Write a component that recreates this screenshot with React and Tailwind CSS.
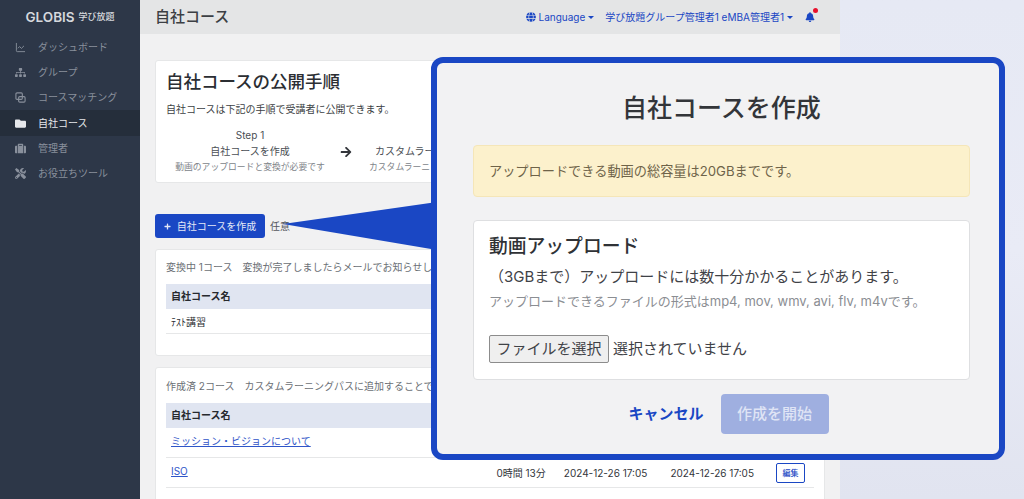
import { FaArrowRight, FaBell, FaFolder, FaGlobe, FaPlus, FaSitemap, FaSuitcase, FaTools } from 'react-icons/fa'
import { LuChartLine } from 'react-icons/lu'

const font = "font-['Inter','Noto_Sans_CJK_JP',sans-serif]"

// two offset squares, the matching icon in the sidebar
function MatchIcon({ className }) {
  return (
    <svg className={className} viewBox="0 0 12 12" fill="none" stroke="currentColor" strokeWidth="1.2">
      <rect x="1" y="1" width="7" height="7" rx="1.2" />
      <rect x="4" y="5" width="7" height="6" rx="1.2" />
    </svg>
  )
}

const nav = [
  { label: 'ダッシュボード', icon: LuChartLine },
  { label: 'グループ', icon: FaSitemap },
  { label: 'コースマッチング', icon: MatchIcon },
  { label: '自社コース', icon: FaFolder, active: true },
  { label: '管理者', icon: FaSuitcase },
  { label: 'お役立ちツール', icon: FaTools },
]

function Caret() {
  return <span className="ml-[3px] h-0 w-0 border-x-[3px] border-t-[3px] border-x-transparent border-t-[#1a47c4]" />
}

function Sidebar() {
  return (
    <aside className="flex w-[140px] shrink-0 flex-col bg-[#2d3748]">
      <div className="flex h-[34px] shrink-0 items-center justify-center gap-[4px] text-[#d5d8dd]">
        <span className="text-[13.5px] font-semibold">GLOBIS</span>
        <span className="text-[9px] font-medium">学び放題</span>
      </div>
      <nav className="pt-[0.5px]">
        {nav.map(({ label, icon: Icon, active }) => (
          <div
            key={label}
            className={`flex h-[25.3px] items-center pl-[15px] text-[10px] ${active ? 'bg-[#252e3b] text-[#e6e8eb]' : 'text-[#89909c]'}`}
          >
            <Icon className="mr-[12px] h-[11px] w-[11px] shrink-0" />
            <span>{label}</span>
          </div>
        ))}
      </nav>
    </aside>
  )
}

function Header() {
  return (
    <header className="flex h-[34px] shrink-0 items-center justify-between bg-[#e4e5e6] pl-[15px] pr-[25px]">
      <h1 className="text-[15px] font-medium text-[#3c3f44]">自社コース</h1>
      <div className="flex items-center text-[10px] text-[#1a47c4]">
        <FaGlobe className="mr-[3px] h-[10px] w-[10px]" />
        <span>Language</span>
        <Caret />
        <span className="ml-[11px]">学び放題グループ管理者1 eMBA管理者1</span>
        <Caret />
        <span className="relative ml-[12px]">
          <FaBell className="h-[10px] w-[10px]" />
          <span className="absolute right-[-3px] top-[-4px] h-[5px] w-[5px] rounded-full bg-[#e8112d]" />
        </span>
      </div>
    </header>
  )
}

function Steps() {
  return (
    <section className="h-[123px] shrink-0 rounded-[3px] border border-[#e6e7e8] bg-white px-[10px] pt-[9px]">
      <h2 className="text-[17.5px] font-medium leading-[24px] text-[#2b2e33]">自社コースの公開手順</h2>
      <p className="mt-[9px] text-[10px] leading-[13px] text-[#3c3f44]">自社コースは下記の手順で受講者に公開できます。</p>
      <div className="mt-[12px] flex items-center">
        <div className="w-[168px] text-center text-[#4a4e54]">
          <p className="text-[10px] leading-[15px]">Step 1</p>
          <p className="text-[10px] leading-[16px]">自社コースを作成</p>
          <p className="text-[8.8px] leading-[15px] text-[#80848a]">動画のアップロードと変換が必要です</p>
        </div>
        <FaArrowRight className="ml-[6px] mt-[1px] h-[12px] w-[12px] text-[#33363b]" />
        <div className="ml-[17px] w-[120px] whitespace-nowrap text-[#4a4e54]">
          <p className="text-[10px] leading-[15px]">&nbsp;</p>
          <p className="pl-[6px] text-[10px] leading-[16px]">カスタムラーニングパス</p>
          <p className="text-[8.8px] leading-[15px] text-[#80848a]">カスタムラーニングパスに追加</p>
        </div>
      </div>
    </section>
  )
}

function CourseCard({ className, note, children }) {
  return (
    <section className={`shrink-0 rounded-[3px] border border-[#e6e7e8] bg-white px-[10px] ${className}`}>
      <p className="whitespace-nowrap text-[10px] leading-[14px] text-[#6b6f75]">{note}</p>
      <div className="mt-[10px] flex h-[25px] items-center bg-[#e0e5f1] pl-[5px] text-[10px] font-bold text-[#26292e]">
        自社コース名
      </div>
      {children}
    </section>
  )
}

function Row({ children, right, className }) {
  return (
    <div className={`flex items-start justify-between border-b border-[#e6e7e8] pl-[5px] pr-[9px] pt-[6px] text-[10px] leading-[14px] ${className}`}>
      <div>{children}</div>
      {right}
    </div>
  )
}

function Modal() {
  return (
    <div className="absolute left-[431px] top-[57px] h-[403px] w-[574px] rounded-[12px] border-[6px] border-[#1a47c4] bg-[#f2f2f3] pl-[36px] pr-[29px] pt-[29px]">
      <h2 className="text-center text-[25px] font-medium leading-[33px] text-[#333539]">自社コースを作成</h2>
      <div className="mt-[20px] flex h-[52px] items-center rounded-[4px] border border-[#f5e6b8] bg-[#fcf1cc] px-[15px] pt-[1px] text-[13.2px] text-[#6e6349]">
        アップロードできる動画の総容量は20GBまでです。
      </div>
      <div className="mt-[23px] h-[160px] rounded-[4px] border border-[#dedfe1] bg-white px-[15px] pt-[13px]">
        <h3 className="text-[18.8px] font-medium leading-[25px] text-[#2f3236]">動画アップロード</h3>
        <p className="mt-[8px] whitespace-nowrap text-[15px] leading-[20px] text-[#3f4247]">（3GBまで）アップロードには数十分かかることがあります。</p>
        <p className="mt-[5px] whitespace-nowrap text-[13px] leading-[18px] text-[#8b8e93]">アップロードできるファイルの形式はmp4, mov, wmv, avi, flv, m4vです。</p>
        <div className="mt-[25px] flex items-center text-[15px] text-[#3f4247]">
          <span className="flex h-[28px] w-[120px] items-center justify-center rounded-[2px] border border-[#8c8c8c] bg-[#efefef]">ファイルを選択</span>
          <span className="ml-[4px]">選択されていません</span>
        </div>
      </div>
      <div className="mt-[14px] flex items-center justify-center gap-[17px] pl-[14px]">
        <span className="text-[15px] font-bold text-[#1a47c4]">キャンセル</span>
        <span className="flex h-[40px] w-[108px] items-center justify-center rounded-[4px] bg-[#9fafe0] text-[15px] font-medium text-[#dfe4f5]">作成を開始</span>
      </div>
    </div>
  )
}

export default function App() {
  return (
    <div className={`relative flex h-[499px] w-[1024px] overflow-hidden bg-gradient-to-b from-[#e6e9f4] via-[#e9ebf6] to-[#e1e4f0] ${font}`}>
      <Sidebar />
      <main className="flex w-[700px] flex-col overflow-hidden bg-[#f1f1f2]">
        <Header />
        <div className="flex shrink-0 flex-col px-[15px] pt-[26px]">
          <Steps />
          <div className="mt-[31px] flex shrink-0 items-center">
            <span className="flex h-[24px] w-[110px] items-center justify-center rounded-[3px] bg-[#1a47c4] text-[10px] text-[#e3e7f6]">
              <FaPlus className="mr-[6px] h-[7px] w-[7px]" />
              自社コースを作成
            </span>
            <span className="ml-[5px] text-[10px] text-[#55585e]">任意</span>
          </div>
          <CourseCard className="mt-[11px] h-[107px] pt-[10px]" note="変換中 1コース　変換が完了しましたらメールでお知らせします。">
            <Row className="h-[25px]"><span className="text-[#2b2e33]">ﾃｽﾄ講習</span></Row>
          </CourseCard>
          <CourseCard className="mt-[11px] pb-[20px] pt-[11px]" note="作成済 2コース　カスタムラーニングパスに追加することで受講者に公開できます。">
            <Row className="h-[30px]"><span className="text-[#2f55c8] underline">ミッション・ビジョンについて</span></Row>
            <Row
              className="h-[30px]"
              right={
                <div className="mt-[-1px] flex items-center text-[10px] text-[#33363b]">
                  <span>0時間 13分</span>
                  <span className="ml-[18px]">2024-12-26 17:05</span>
                  <span className="ml-[23px]">2024-12-26 17:05</span>
                  <span className="ml-[22px] flex h-[20px] w-[29px] items-center justify-center rounded-[2px] border border-[#1a47c4] bg-white text-[8px] font-medium text-[#1a47c4]">編集</span>
                </div>
              }
            >
              <span className="text-[#2f55c8] underline">ISO</span>
            </Row>
          </CourseCard>
        </div>
      </main>
      <svg className="absolute left-[280px] top-[195px]" width="157" height="62" viewBox="0 0 157 62">
        <path d="M3 29 L157 7 L157 55 Z" fill="#1a47c4" />
      </svg>
      <Modal />
    </div>
  )
}
